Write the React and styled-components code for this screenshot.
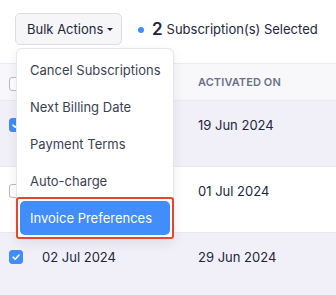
import React from 'react'
import styled, { createGlobalStyle, css } from "styled-components"

const GlobalStyle = createGlobalStyle`
  body {
    margin: 0;
    background: #ffffff;
    font-family: Inter, "Noto Sans", sans-serif;
    color: #21263c;
  }
`;

const menuItems = [
  "Cancel Subscriptions",
  "Next Billing Date",
  "Payment Terms",
  "Auto-charge",
  "Invoice Preferences",
];

const rows = [
  { created: "", activated: "19 Jun 2024", selected: true },
  { created: "", activated: "01 Jul 2024", selected: false },
  { created: "02 Jul 2024", activated: "29 Jun 2024", selected: true },
];

function Check() {
  return (
    <svg width="10" height="10" viewBox="0 0 10 10">
      <path d="M2 5.2 L4.2 7.2 L8 3" fill="none" stroke="#fff" strokeWidth="1.6" strokeLinecap="round" strokeLinejoin="round" />
    </svg>
  );
}

export default function App() {
  return (
    <Page>
      <GlobalStyle />
      <Toolbar>
        <BulkButton>
          Bulk Actions
          <Caret />
        </BulkButton>
        <Selected>
          <Dot />
          <Count>2</Count>
          <span>Subscription(s) Selected</span>
        </Selected>
      </Toolbar>

      <Table>
        <HeaderRow>
          <CheckCell><Box /></CheckCell>
          <Cell />
          <HeadCell>Activated On</HeadCell>
        </HeaderRow>
        {rows.map((r, i) => (
          <Row key={i} $selected={r.selected}>
            <CheckCell>
              <Box $checked={r.selected}>{r.selected && <Check />}</Box>
            </CheckCell>
            <Cell>{r.created}</Cell>
            <Cell>{r.activated}</Cell>
          </Row>
        ))}
      </Table>

      <Menu>
        {menuItems.map((m, i) => (
          <MenuItem key={m} $active={i === menuItems.length - 1}>{m}</MenuItem>
        ))}
      </Menu>
    </Page>
  );
}

const Page = styled.div`
  position: relative;
  width: 336px;
  height: 295px;
  overflow: hidden;
  white-space: nowrap;
`;

const Toolbar = styled.div`
  display: flex;
  align-items: center;
  height: 32px;
  padding: 13px 0 18px 15px;
`;

const BulkButton = styled.div`
  display: flex;
  align-items: center;
  box-sizing: border-box;
  height: 32px;
  width: 107px;
  padding: 0 11px;
  background: #f6f6f8;
  border: 1px solid #dcdce4;
  border-radius: 5px;
  font-size: 13px;
  color: #21263c;
`;

const Caret = styled.span`
  margin-left: 4px;
  margin-top: 1px;
  border-left: 3px solid transparent;
  border-right: 3px solid transparent;
  border-top: 3.5px solid #21263c;
`;

const Selected = styled.div`
  display: flex;
  align-items: center;
  margin-left: 16px;
  font-size: 13px;
  color: #21263c;
`;

const Dot = styled.span`
  width: 6px;
  height: 6px;
  border-radius: 50%;
  background: #408dfb;
  margin-right: 8px;
  margin-top: 1px;
`;

const Count = styled.span`
  font-size: 17px;
  font-weight: 600;
  margin-right: 4px;
`;

const Table = styled.div`
  display: flex;
  flex-direction: column;
`;

const HeaderRow = styled.div`
  display: grid;
  grid-template-columns: 42px 156px 1fr;
  align-items: center;
  height: 36px;
  background: #f8f8fb;
  border-top: 1px solid #ebebf1;
  border-bottom: 1px solid #e9e9f0;
`;

const Row = styled.div`
  display: grid;
  grid-template-columns: 42px 156px 1fr;
  align-items: start;
  box-sizing: border-box;
  height: 66px;
  padding-top: 14px;
  background: ${p => (p.$selected ? "#f1f0f9" : "#ffffff")};
  border-bottom: 1px solid #e9e9f0;
`;

const CheckCell = styled.div`
  display: flex;
  padding-left: 9px;
  padding-top: 3px;
`;

const HeadCell = styled.div`
  font-size: 11px;
  font-weight: 600;
  color: #6c718a;
  letter-spacing: 0.1px;
  text-transform: uppercase;
`;

const Cell = styled.div`
  font-size: 13px;
  color: #21263c;
  line-height: 20px;
`;

const Box = styled.span`
  display: flex;
  align-items: center;
  justify-content: center;
  box-sizing: border-box;
  width: 14px;
  height: 14px;
  border-radius: 3px;
  background: ${p => (p.$checked ? "#408dfb" : "#ffffff")};
  border: 1px solid ${p => (p.$checked ? "#408dfb" : "#b9bcc8")};
`;

const Menu = styled.div`
  position: absolute;
  left: 16px;
  top: 48px;
  width: 158px;
  box-sizing: border-box;
  padding: 4px 3px;
  display: flex;
  flex-direction: column;
  gap: 3px;
  background: #ffffff;
  border: 1px solid #e6e6ee;
  border-radius: 6px;
  box-shadow: 0 4px 12px rgba(30, 30, 60, 0.08);
`;

const MenuItem = styled.div`
  position: relative;
  display: flex;
  align-items: center;
  height: 34px;
  padding: 0 10px;
  border-radius: 5px;
  font-size: 13px;
  color: ${p => (p.$active ? "#ffffff" : "#3b3f52")};
  background: ${p => (p.$active ? "#408dfb" : "transparent")};

  ${p => p.$active && css`
    &::after {
      content: "";
      position: absolute;
      inset: -4px -4px -4px -4px;
      border: 2px solid #e8452c;
      border-radius: 3px;
    }
  `}
`;
